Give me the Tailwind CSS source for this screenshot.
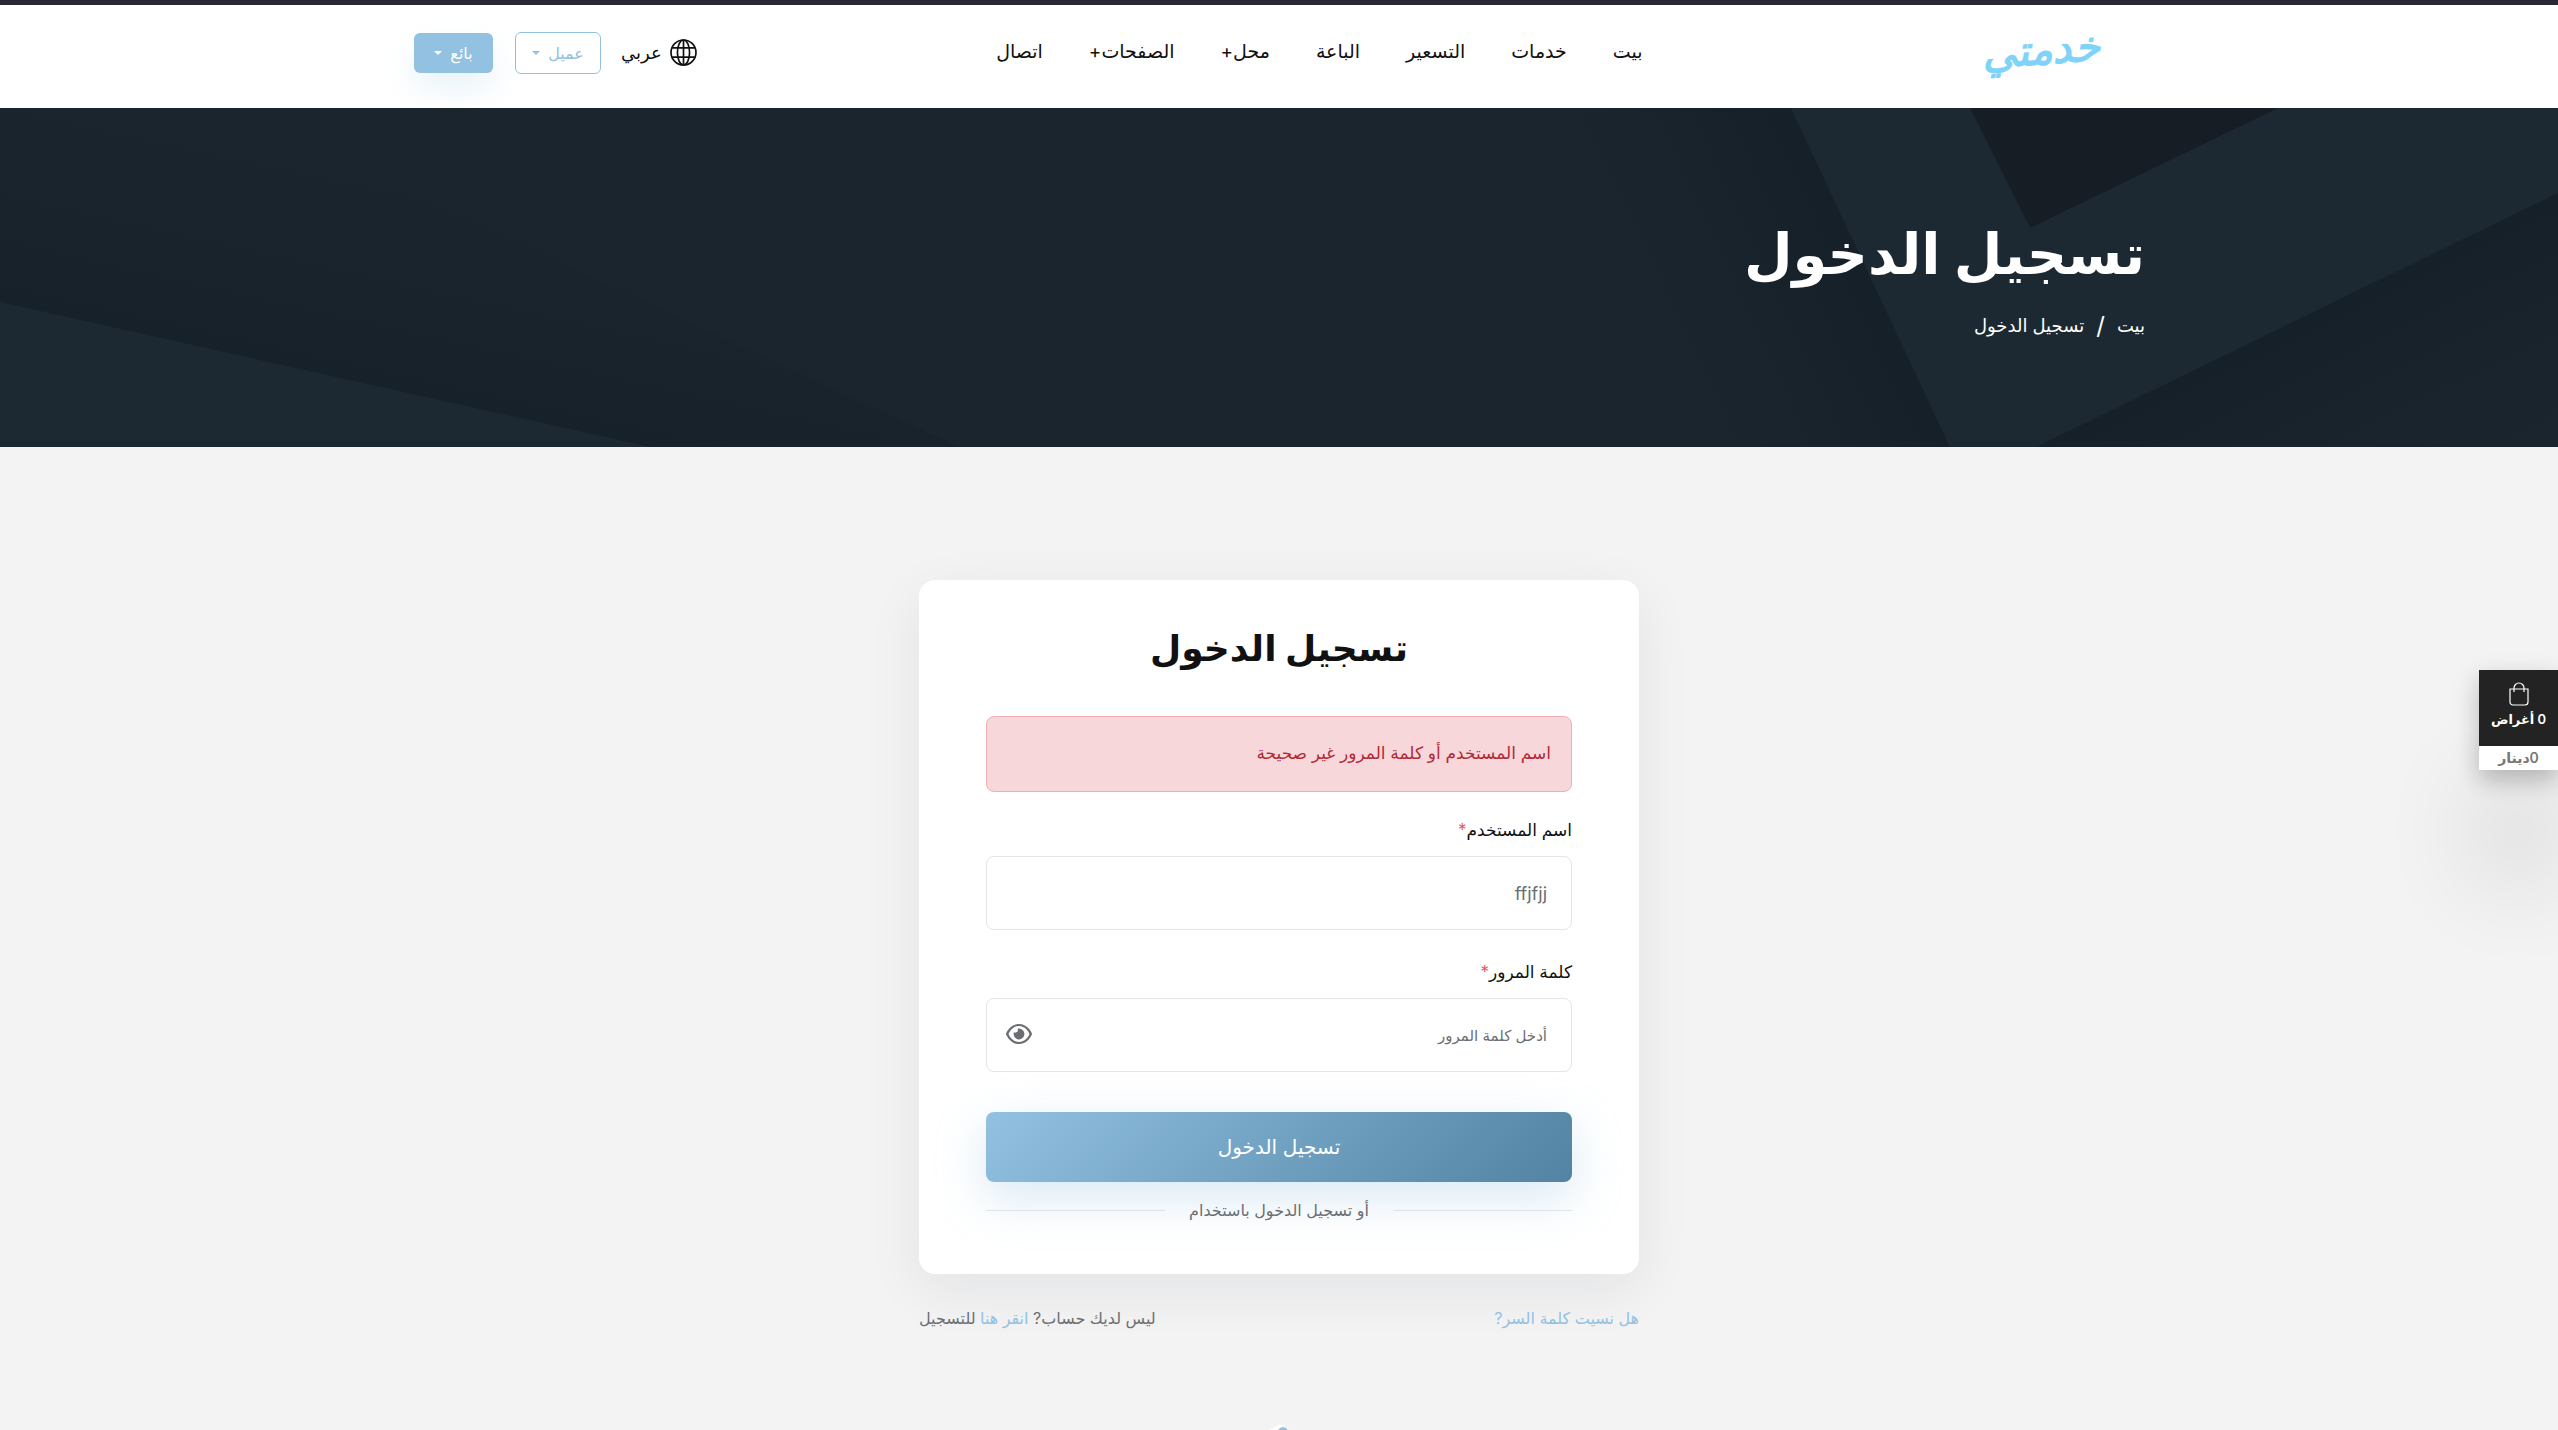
<!DOCTYPE html>
<html lang="ar" dir="rtl">
<head>
  <meta charset="UTF-8" />
  <meta name="viewport" content="width=device-width, initial-scale=1" />
  <title>تسجيل الدخول</title>
  <script src="https://cdn.jsdelivr.net/npm/@tailwindcss/browser@4"></script>
</head>
<body class="relative flex min-h-screen flex-col overflow-x-hidden bg-[#f3f3f3] font-[Inter,'DejaVu_Sans',sans-serif] text-[#111]">

  <!-- Header -->
  <header class="border-t-5 border-[#2b2833] bg-white">
    <div class="mx-auto flex h-[103px] max-w-[1730px] items-center justify-between pb-2">
      <a href="#" class="w-[202px] -rotate-4 ps-11 pb-2 text-[42px] leading-14 font-bold text-[#7fd3f9] italic">خدمتي</a>

      <nav class="flex items-center gap-[46px] text-[19px]">
        <a href="#">بيت</a>
        <a href="#">خدمات</a>
        <a href="#">التسعير</a>
        <a href="#">الباعة</a>
        <a href="#">محل+</a>
        <a href="#">الصفحات+</a>
        <a href="#">اتصال</a>
      </nav>

      <div class="flex items-center">
        <button type="button" class="flex items-center gap-2 text-lg">
          <svg class="size-[27px]" viewBox="0 0 16 16" fill="none" stroke="currentColor">
            <circle cx="8" cy="8" r="7.4" />
            <ellipse cx="8" cy="8" rx="3.6" ry="7.4" />
            <path d="M8 .6v14.8M1.3 5.3h13.4M1.3 10.7h13.4" />
          </svg>
          عربي
        </button>
        <button type="button" class="ms-5 flex h-[42px] w-[86px] items-center justify-center gap-2 rounded-md border border-[#92c1e1] text-base text-[#92c1e1]">
          عميل
          <svg class="h-1 w-2" viewBox="0 0 8 4" fill="currentColor"><path d="M0 0h8L4 4z" /></svg>
        </button>
        <button type="button" class="ms-[22px] flex h-10 w-[79px] items-center justify-center gap-2 rounded-md bg-[#92c1e1] text-base text-white shadow-[0_16px_32px_rgba(146,193,225,0.2)]">
          بائع
          <svg class="h-1 w-2" viewBox="0 0 8 4" fill="currentColor"><path d="M0 0h8L4 4z" /></svg>
        </button>
      </div>
    </div>
  </header>

  <!-- Page banner -->
  <section class="relative bg-[#1b252d] text-white">
    <svg class="absolute inset-0 size-full" viewBox="0 0 2558 339" preserveAspectRatio="none">
      <defs>
        <linearGradient id="shadeLeft" gradientUnits="userSpaceOnUse" x1="300" y1="261" x2="345" y2="60">
          <stop offset="0" stop-color="#172129" />
          <stop offset="1" stop-color="#1b252d" />
        </linearGradient>
        <linearGradient id="shadeMid" gradientUnits="userSpaceOnUse" x1="1860" y1="170" x2="1690" y2="250">
          <stop offset="0" stop-color="#162028" />
          <stop offset="1" stop-color="#1b252d" />
        </linearGradient>
        <linearGradient id="shadeRight" gradientUnits="userSpaceOnUse" x1="2290" y1="215" x2="2380" y2="400">
          <stop offset="0" stop-color="#162028" />
          <stop offset="1" stop-color="#1b252d" />
        </linearGradient>
      </defs>
      <path d="M0 0L420 90L960 339H0z" fill="url(#shadeLeft)" />
      <path d="M0 194L650 339H0z" fill="#1d2932" />
      <path d="M1560 0H1791L1950 339H1700z" fill="url(#shadeMid)" />
      <path d="M1791 0H2558V85L2036 339H1950z" fill="#1d2932" />
      <path d="M1970 0H2278L2030 120z" fill="#161d25" />
      <path d="M2558 85V339H2036z" fill="url(#shadeRight)" />
    </svg>
    <div class="relative mx-auto flex h-[339px] max-w-[1732px] flex-col justify-center gap-4">
      <h1 class="text-[56px] leading-20 font-bold">تسجيل الدخول</h1>
      <div class="flex items-center gap-3 text-lg">
        <a href="#">بيت</a>
        <span class="text-2xl">/</span>
        <span>تسجيل الدخول</span>
      </div>
    </div>
  </section>

  <!-- Login -->
  <main class="mx-auto w-full max-w-[720px] pt-[133px] text-[#6b6f73]">
    <form class="rounded-2xl bg-white px-[67px] pt-9 pb-13 shadow-[0_16px_56px_rgba(20,30,50,0.07)]">
      <h2 class="text-center text-4xl leading-16 font-bold text-[#111]">تسجيل الدخول</h2>

      <div role="alert" class="mt-9 flex h-[76px] items-center rounded-lg border border-[#f1aeb5] bg-[#f8d7da] px-5 text-[17px] text-[#b02a37]">اسم المستخدم أو كلمة المرور غير صحيحة</div>

      <label for="username" class="mt-6 mb-3 block text-[17px] leading-7 text-[#111]">اسم المستخدم<span class="text-[#eb5757]">*</span></label>
      <input id="username" type="text" value="ffjfjj" class="block h-[74px] w-full rounded-lg border border-[#e5e5e5] px-6 text-lg" />

      <label for="password" class="mt-7 mb-3 block text-[17px] leading-7 text-[#111]">كلمة المرور<span class="text-[#eb5757]">*</span></label>
      <div class="relative">
        <input id="password" type="password" placeholder="أدخل كلمة المرور" class="block h-[74px] w-full rounded-lg border border-[#e5e5e5] px-6 text-[15px] placeholder:text-[#6b6f73]" />
        <button type="button" aria-label="إظهار كلمة المرور" class="absolute top-6 left-5">
          <svg class="h-6 w-[26px]" viewBox="0 0 576 512" fill="currentColor">
            <path d="M288 80c-65 0-118 30-157 66-37 34-62 75-75 110 13 35 38 76 75 110 39 36 92 66 157 66s118-30 157-66c37-34 62-75 75-110-13-35-38-76-75-110-39-36-92-66-157-66zM95 113c48-44 113-81 193-81s145 37 193 81c47 43 78 95 93 131 3 8 3 16 0 24-15 36-46 88-93 131-48 44-113 81-193 81s-145-37-193-81C48 356 17 304 2 268c-3-8-3-16 0-24 15-36 46-88 93-131z" fill-rule="evenodd" />
            <path d="M288 136a120 120 0 1 1-120 120c0-14 2-27 6-39 36 24 110 0 84-77 10-3 20-4 30-4z" />
          </svg>
        </button>
      </div>

      <button type="submit" class="mt-10 block h-[70px] w-full rounded-lg bg-linear-135 from-[#92c1e1] to-[#5283a3] text-xl text-white shadow-[0_16px_48px_rgba(146,193,225,0.35)]">تسجيل الدخول</button>

      <div class="mt-4 flex items-center text-base">
        <span class="h-px flex-1 bg-[#dfe3e6]"></span>
        <span class="px-6">أو تسجيل الدخول باستخدام</span>
        <span class="h-px flex-1 bg-[#dfe3e6]"></span>
      </div>
    </form>

    <div class="mt-8 flex justify-between text-base">
      <a href="#" class="text-[#92c1e1]">هل نسيت كلمة السر?</a>
      <p>ليس لديك حساب? <a href="#" class="text-[#92c1e1]">انقر هنا</a> للتسجيل</p>
    </div>
  </main>

  <!-- Top of the footer mark -->
  <svg class="mx-auto mt-auto h-[6px] w-5" viewBox="0 0 20 6">
    <path d="M0 6L11 0L20 6z" fill="#fff" />
    <path d="M9 6Q14 0 19 6z" fill="#92c1e1" />
  </svg>

  <!-- Floating cart -->
  <aside class="fixed top-[670px] right-0 w-[79px] text-center text-[13px] font-semibold shadow-[0_10px_24px_rgba(0,0,0,0.25),0_110px_100px_rgba(0,0,0,0.12)]">
    <a href="#" class="flex h-[76px] flex-col items-center gap-1 bg-[#232323] pt-3 text-white">
      <svg class="h-6 w-5" viewBox="0 0 20 24" fill="none" stroke="currentColor" stroke-width="1.2">
        <path d="M1 7h18v13a3 3 0 0 1-3 3H4a3 3 0 0 1-3-3zM5 10V6a5 5 0 0 1 10 0v4" />
      </svg>
      <span>0 أغراض</span>
    </a>
    <div class="h-6 bg-white text-sm leading-6 text-[#777]">0دينار</div>
  </aside>
</body>
</html>
